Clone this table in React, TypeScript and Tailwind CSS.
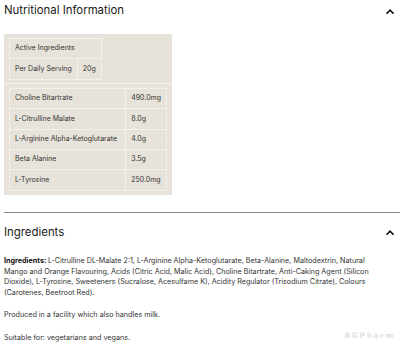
import React from "react";

const Chevron = () => (
  <svg width="8" height="5" viewBox="0 0 8 5" className="block">
    <path d="M1 4.2 L4 1.2 L7 4.2" fill="none" stroke="#111" strokeWidth="1.6" strokeLinecap="square" />
  </svg>
);

const cell = "border border-[#f4f1ec] px-[5px] h-[20.4px] align-middle";

export default function App() {
  const rows: [string, string][] = [
    ["Choline Bitartrate", "490.0mg"],
    ["L-Citrulline Malate", "8.0g"],
    ["L-Arginine Alpha-Ketoglutarate", "4.0g"],
    ["Beta Alanine", "3.5g"],
    ["L-Tyrosine", "250.0mg"],
  ];
  return (
    <div className="w-[400px] h-[345px] bg-white text-[#222] relative overflow-hidden" style={{ fontFamily: "Inter, 'Noto Sans', sans-serif" }}>
      <div className="flex items-center justify-between pl-1 pr-[6px] h-[22px]">
        <div className="text-[11.4px] leading-none text-[#1a1a1a]">Nutritional Information</div>
        <Chevron />
      </div>
      <div className="pl-1 mt-[12px]">
        <div className="w-[168px] bg-[#e8e3da] pt-[4px] pb-[4px]">
          <div className="px-[5px]">
            <table className="border-collapse text-[7px] text-[#333]">
              <tbody>
                <tr>
                  <td className={cell} colSpan={2}>Active Ingredients</td>
                </tr>
                <tr>
                  <td className={cell}>Per Daily Serving</td>
                  <td className={cell}>20g</td>
                </tr>
              </tbody>
            </table>
          </div>
          <div className="h-px bg-[#f4f1ec] mt-[3px] mb-[4px]" />
          <div className="px-[5px]">
            <table className="border-collapse text-[7px] text-[#333] w-full">
              <tbody>
                {rows.map(([a, b]) => (
                  <tr key={a}>
                    <td className={cell + " w-[118px]"}>{a}</td>
                    <td className={cell}>{b}</td>
                  </tr>
                ))}
              </tbody>
            </table>
          </div>
        </div>
      </div>
      <div className="h-px bg-[#8a8a8a] ml-1 mt-[17.5px]" />
      <div className="flex items-center justify-between pl-1 pr-[6px] mt-[13px] h-[12px]">
        <div className="text-[11.4px] leading-none text-[#1a1a1a]">Ingredients</div>
        <Chevron />
      </div>
      <div className="pl-1 pr-[18px] mt-[17.5px] text-[7.2px] leading-[10.8px] text-[#333]">
        <p>
          <b className="font-bold text-[#111]">Ingredients: </b>L-Citrulline DL-Malate 2:1, L-Arginine Alpha-Ketoglutarate, Beta-Alanine, Maltodextrin, Natural Mango and Orange Flavouring, Acids (Citric Acid, Malic Acid), Choline Bitartrate, Anti-Caking Agent (Silicon Dioxide), L-Tyrosine, Sweeteners (Sucralose, Acesulfame K), Acidity Regulator (Trisodium Citrate), Colours (Carotenes, Beetroot Red).
        </p>
        <p className="mt-[11.5px]">Produced in a facility which also handles milk.</p>
        <p className="mt-[11.5px]">Suitable for: vegetarians and vegans.</p>
      </div>
      <div className="absolute right-[5px] bottom-[4px] text-[7.5px] font-bold tracking-[1.6px] text-[#e2e2e2]" style={{ fontFamily: "'DejaVu Sans', sans-serif" }}>BGPharm</div>
    </div>
  );
}
